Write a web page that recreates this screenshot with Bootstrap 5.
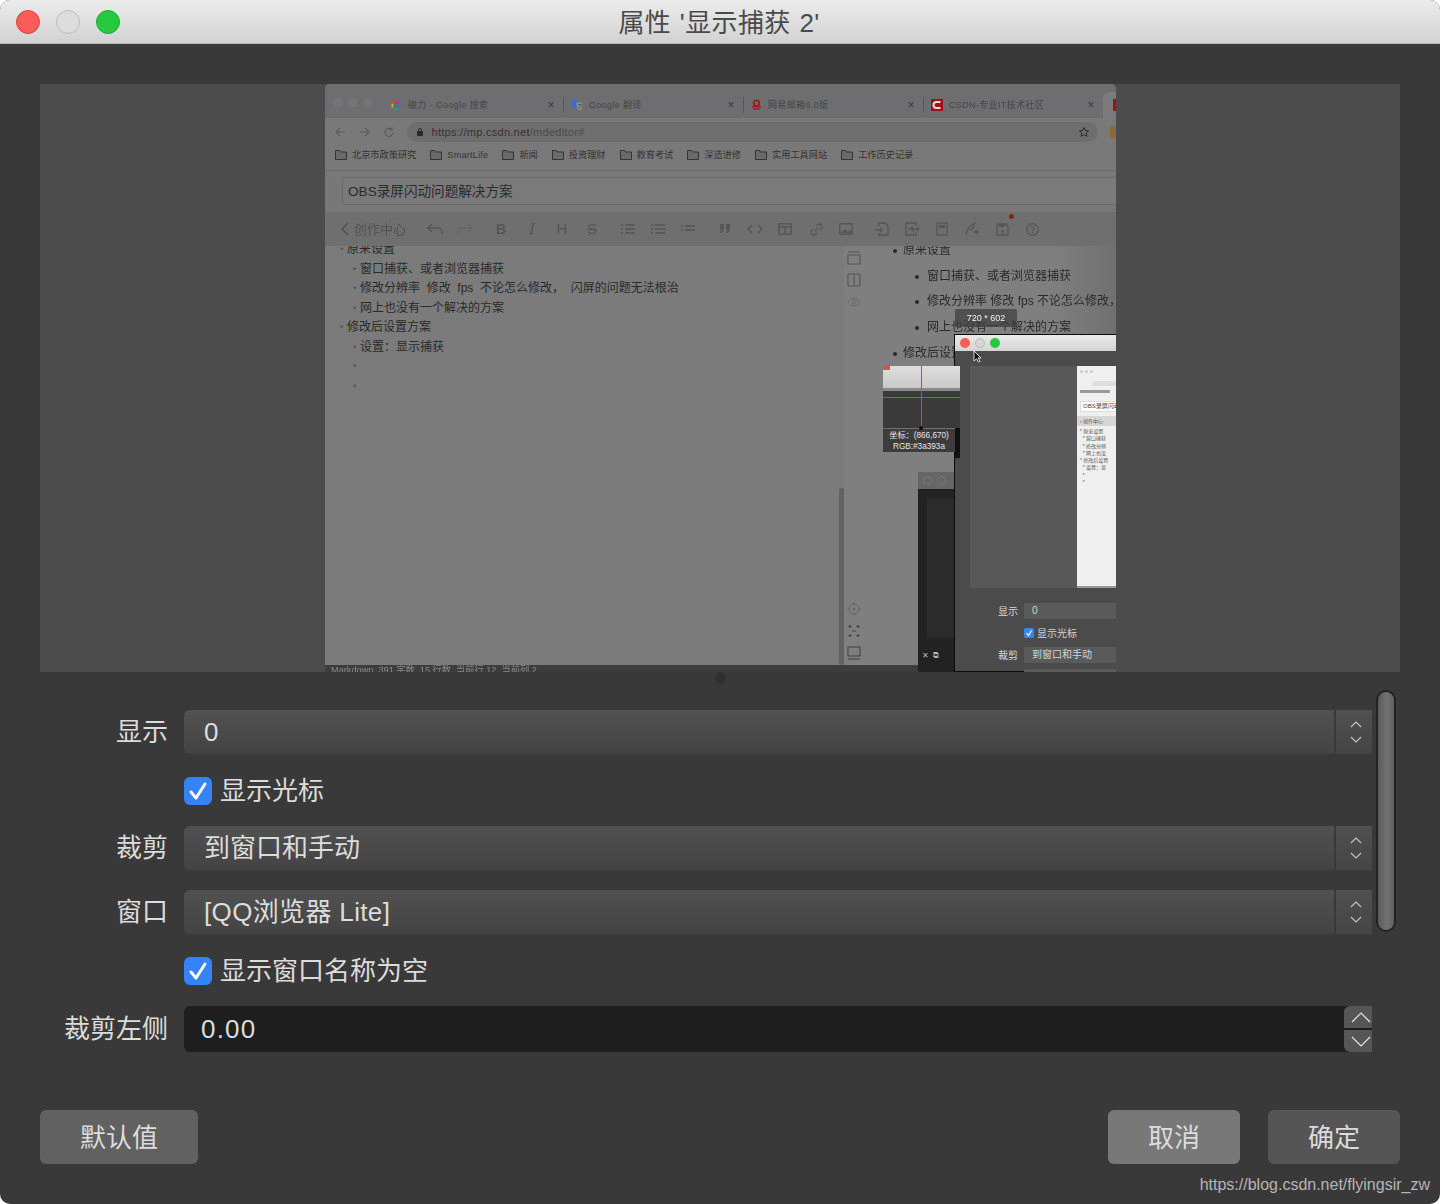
<!DOCTYPE html>
<html lang="zh-CN">
<head>
<meta charset="utf-8">
<title>属性 '显示捕获 2'</title>
<link href="https://cdn.jsdelivr.net/npm/bootstrap@5.3.0/dist/css/bootstrap.min.css" rel="stylesheet">
<style>
html,body{height:100%;background:#fff;overflow:hidden}
body{font-family:"Liberation Sans","Noto Sans CJK SC",sans-serif;color:#dcdcdc}
.appwin{width:1440px;height:1204px;background:#3a393a;border-radius:10px;overflow:hidden;position:relative}
.titlebar{height:44px;background:linear-gradient(#ececec,#d2d2d2);border-bottom:1px solid #b5b5b5;position:relative}
.titletext{font-size:26px;line-height:47px;color:#4a4a4a;text-align:center;letter-spacing:.4px;word-spacing:1px;padding-right:2px}
.lights{position:absolute;left:16px;top:10px;gap:16px}
.lamp{width:24px;height:24px;border-radius:50%;display:block}
.lamp-r{background:#fc5c57;border:1px solid #e0443e}
.lamp-y{background:#dcdcdc;border:1px solid #bcbcbc}
.lamp-g{background:#27c93f;border:1px solid #1dad2b}
.winbody{padding:40px 40px 0}
.preview{height:588px;background:#4c4c4c;position:relative;overflow:hidden}
/* captured browser */
.cap{position:absolute;left:285px;top:0;width:791px;height:588px;overflow:hidden;background:#7b7b7b;border-radius:5px 5px 0 0;color:#2c2c2c;font-size:12px;filter:blur(.25px);display:flex;flex-direction:column}
.tabstrip{height:34px;background:#6e6e70;padding:8px 0 0 8px;font-size:9px;color:#454545;line-height:1;flex:none}
.caplights{gap:5px;width:58px;margin-top:-5px;flex:none}
.caplights span{width:10px;height:10px;border-radius:50%;background:#757575;display:block}
.captab{width:180px;height:26px;flex:none}
.captab.last{width:172px}
.captab svg{flex:none;margin-right:6px}
.captab .tx{flex:1;white-space:nowrap;letter-spacing:.35px}
.captab .cl{width:12px;margin-right:6px;font-size:12px;color:#3a3a3a;text-align:center}
.captab .sep{width:1px;height:16px;background:#585858;margin-right:7px}
.tabend{flex:1;height:26px;background:#7b7b7b;border-radius:8px 0 0 0;padding-left:10px}
.navrow{height:28px;background:#79797a;color:#555;padding-left:3px;flex:none}
.navbtn{width:24.5px;display:flex;justify-content:center;flex:none}
.pill{width:691px;height:20px;border-radius:10px;background:#6e6e6f;margin-left:5px;font-size:11px;letter-spacing:.28px;color:#333;padding:0 8px 0 9px;flex:none}
.pill .dim{color:#4a4a4a}
.extico{width:6px;height:12px;background:#8a6a3a;margin-left:12px;flex:none}
.bmrow{height:24px;background:#79797a;font-size:9.2px;color:#333;padding:0 0 5px 10px;white-space:nowrap;flex:none}
.bm{display:flex;align-items:center;gap:5px;flex:none;margin-right:14px}
.bm .sl{letter-spacing:.2px}
.tiarea{height:42px;background:#787878;padding:6px 0 7px 17px;border-top:1px solid #6c6c6c;flex:none}
.tibox{height:28px;border:1px solid #6b6b6b;border-right:0;border-radius:3px 0 0 3px;background:#7a7a7a;font-size:13.6px;line-height:28px;padding-left:5px;color:#2b2b2b}
.tbar{height:34px;background:#6f6f6f;color:#505050;padding-left:15px;flex:none}
.tback{font-size:13px;color:#505050;width:80px;flex:none;line-height:1}
.slot{width:30px;display:flex;justify-content:center;align-items:center;flex:none;font-size:14px;font-weight:700;color:#555;position:relative}
.slot.it{font-style:italic;font-family:"Liberation Serif",serif;font-weight:400;font-size:16px;margin-left:1px}
.slot.lt{font-weight:400;font-size:15px}
.slot.st{text-decoration:line-through;font-weight:400;font-size:15px}
.g6{margin-left:6px}
.g7{margin-left:7px}
.p1{margin-left:1px}
.reddot{position:absolute;width:5px;height:5px;border-radius:50%;background:#8f1f1f;right:3px;top:-9px}
.panes{flex:1;display:flex;min-height:0;overflow:hidden}
.lp{width:519px;padding-left:15px;position:relative;margin-top:-6px;flex:none;background:#7b7b7b}
.ln{height:19.5px;line-height:19.5px;white-space:pre;color:#2a2a2a}
.ln b{font-weight:400;color:#4a4a4a;display:inline-block;width:7px;font-size:9px}
.ln.l2{padding-left:13px}
.vsb{position:absolute;right:0;top:248px;width:5px;height:177px;background:#626262;border-radius:3px}
.sidec{width:20px;background:#7f7f7f;flex:none;padding:5px 0;flex-direction:column;display:flex;align-items:center;justify-content:space-between}
.sidegrp{display:flex;flex-direction:column;gap:8px;align-items:center}
.rp{flex:1;background:linear-gradient(90deg,#7f7f7f 75%,#707070);padding-left:39px;margin-top:-8px;overflow:hidden}
.rln{height:25.7px;line-height:25.7px;white-space:pre;color:#2a2a2a;position:relative}
.rln::before{content:"";position:absolute;left:-10px;top:11px;width:4px;height:4px;border-radius:50%;background:#2a2a2a}
.rln.l2{padding-left:24px}
.rln.l2::before{left:12px}
.stat{height:7px;background:#3d3d3d;font-size:9.2px;line-height:11px;color:#8b8b8b;padding-left:6px;overflow:hidden;white-space:pre;flex:none}
/* overlays inside capture */
.sizetip{position:absolute;left:630px;top:225px;width:62px;height:18px;background:rgba(62,62,62,.72);color:#f2f2f2;font-size:9px;line-height:18px;text-align:center;border-radius:2px 2px 0 0;z-index:4}
.cursorico{position:absolute;left:648px;top:266px;z-index:8}
.magn{position:absolute;left:558px;top:282px;width:77px;height:86px;background:#3a3a3a;z-index:7}
.magtop{height:25px;background:linear-gradient(#dedede,#c9c9c9);position:relative;border-bottom:3px solid #8a8a8a}
.magred{position:absolute;left:0;top:0;width:7px;height:4px;background:#e24b4b}
.maghz{position:absolute;left:0;right:0;top:31px;height:1px;background:#2a9d2a}
.magvt{position:absolute;left:38px;top:0;height:62px;width:1px;background:#2a9d2a}
.magdot{position:absolute;left:36px;top:60px;width:4px;height:4px;border-radius:50%;background:#111}
.magcap{position:absolute;left:0;right:5px;top:62px;height:24px;background:#3c3c3c;border-top:1px solid #707070;color:#e6e6e6;font-size:8.2px;line-height:11px;text-align:center;padding-top:1px;white-space:nowrap}
.magside{position:absolute;right:0;top:62px;width:5px;height:30px;background:#111}
.darkw{position:absolute;left:593px;top:388px;width:40px;height:200px;background:#222;z-index:2}
.darkt{height:17px;background:#666;padding-left:5px;gap:5px}
.darkt span{width:9px;height:9px;border-radius:50%;border:1px solid #777;display:block}
.darki{margin:9px 0 0 9px;height:140px;background:#2c2c2c}
.darkb{margin-top:12px;padding-left:4px;gap:4px;color:#bbb;font-size:8px}
.subw{position:absolute;left:629px;top:250px;width:170px;height:338px;background:#4b4b4b;border:1px solid #0c0c0c;border-right:0;z-index:5;color:#d5d5d5;font-size:10px}
.subt{height:16px;background:linear-gradient(#eaeaea,#d4d4d4);padding-left:5px;gap:5px}
.subt span{width:10px;height:10px;border-radius:50%;display:block}
.lm-r{background:#fc5c57}
.lm-y{background:#d6d6d6;border:1px solid #bbb}
.lm-g{background:#27c93f}
.subp{height:222px;margin:15px 0 0 15px;background:#585858;position:relative;overflow:hidden}
.minib{position:absolute;left:107px;top:0;width:60px;height:222px;background:#efefef;border-bottom:2px solid #999;color:#555;font-size:5px;line-height:7.3px;padding:0 0 0 3px;white-space:pre;overflow:hidden}
.minitop{height:35px;padding-top:4px}
.minidots{gap:2px;height:6px}
.minidots span{width:3px;height:3px;border-radius:50%;background:#ccc;display:block}
.minipill{height:5px;width:50px;background:#ddd;border-radius:3px;margin:5px 0 0 12px}
.minibm{height:3px;width:30px;background:#999;margin-top:4px}
.minib .mt{border:1px solid #ddd;background:#fff;font-size:6px;line-height:9px;margin:0 0 4px 0;padding-left:2px;color:#444}
.minib .mh{background:#d6d6d6;margin:0 0 2px -3px;padding-left:3px;line-height:10px}
.subrow{display:flex;align-items:center;height:16px;margin-top:6px}
.subrow.first{margin-top:15px}
.sublab{width:69px;text-align:right;padding-right:6px;flex:none}
.subsel{width:100px;height:16px;background:#5a5a5a;border-radius:2px;padding-left:8px;line-height:16px;flex:none}
.subchk{width:10px;height:10px;border-radius:2px;background:#3b84f5;margin-right:3px;flex:none;display:block}
/* form */
.handlebar{height:18px}
.handle{width:11px;height:12px;border-radius:50%;background:#303030}
.formwrap{gap:4px}
.formcol{width:1332px;padding-top:20px;flex:none}
.fgrid{display:grid;grid-template-columns:128px 1188px;column-gap:16px;row-gap:20px;align-items:center}
.flab{font-size:26px;line-height:44px;text-align:right;color:#dcdcdc}
.fsel{height:44px;border-radius:6px 0 0 6px;font-size:26px;color:#dcdcdc}
.fsel-main{flex:1;background:linear-gradient(#515151,#434343);border-radius:6px 0 0 6px;padding-left:20px;line-height:44px;white-space:nowrap}
.lat{letter-spacing:.35px}
.fsel-arr{width:36px;margin-left:2px;padding-left:4px;background:linear-gradient(#505050,#454545);gap:8px;flex:none}
.fchk{height:32px;padding-top:2px;gap:8px;font-size:26px;color:#dcdcdc;grid-column:2}
.form-check-input.fbox,.form-check-input.fbox:checked{width:28px;height:28px;margin:0;border-radius:6px;background-color:#3483f8;border:0;background-size:28px;opacity:1;flex:none;background-image:url("data:image/svg+xml,%3Csvg xmlns='http://www.w3.org/2000/svg' viewBox='0 0 28 28'%3E%3Cpath d='M7 15l5 6L21 7' fill='none' stroke='%23fff' stroke-width='3' stroke-linecap='round' stroke-linejoin='round'/%3E%3C/svg%3E")}
.fspin{height:46px;background:#1e1e1e;border-radius:6px 0 0 6px;font-size:26px;padding-left:17px;color:#dcdcdc;position:relative;letter-spacing:1.2px}
.spbtns{position:absolute;right:0;top:0;width:28px;height:46px;display:flex;flex-direction:column;justify-content:space-between}
.spb{height:22px;background:#565656;display:flex;align-items:center;justify-content:center;padding-left:6px}
.spb.up{border-top-left-radius:6px}
.spb.dn{border-bottom-left-radius:6px}
.sbar{width:20px;height:242px;border:2px solid #232323;border-radius:10px;background:linear-gradient(90deg,#5a5a5a,#727272 55%,#606060);flex:none}
.botbar{margin-top:58px}
.btn.dlg{height:54px;border:0;border-radius:6px;font-size:26px;line-height:54px;padding:1px 0 0;color:#dcdcdc;font-family:inherit}
.b-def{width:158px;background:#616161}
.b-can{width:132px;background:#787878}
.b-ok{width:132px;background:#555}
.btngap{gap:28px}
.wm{position:absolute;right:10px;bottom:9px;font-size:16px;line-height:20px;color:#b5b5b5;white-space:nowrap}
</style>
</head>
<body>
<div class="appwin">
  <div class="titlebar">
    <div class="lights d-flex"><span class="lamp lamp-r"></span><span class="lamp lamp-y"></span><span class="lamp lamp-g"></span></div>
    <div class="titletext">属性 '显示捕获 2'</div>
  </div>
  <div class="winbody">
    <div class="preview">
      <div class="cap">
        <div class="tabstrip d-flex align-items-center">
          <div class="caplights d-flex"><span></span><span></span><span></span></div>
          <div class="captab d-flex align-items-center">
            <svg width="11" height="11" viewBox="0 0 24 24"><path d="M22 12h-10v3h6a6.500 6.500 0 1 1-2-7" fill="none" stroke="#3f6fc0" stroke-width="4"/><path d="M16 8a6.500 6.500 0 0 0-10-1" fill="none" stroke="#c8403a" stroke-width="4"/><path d="M5 17a7 7 0 0 0 11 1" fill="none" stroke="#3c9a55" stroke-width="4"/><path d="M4 8a8 8 0 0 0 0 8" fill="none" stroke="#d9a826" stroke-width="4"/></svg>
            <span class="tx">磁力 - Google 搜索</span><span class="cl">×</span><span class="sep"></span>
          </div>
          <div class="captab d-flex align-items-center">
            <svg width="12" height="12" viewBox="0 0 24 24"><rect x="1" y="1" width="13" height="18" rx="2" fill="#3f6fc0"/><path d="M10 7h12v15H13z" fill="#8a8a8a"/><path d="M15 11h6M18 10v2M16 19l4-6" stroke="#444" stroke-width="1.500" fill="none"/></svg>
            <span class="tx">Google 翻译</span><span class="cl">×</span><span class="sep"></span>
          </div>
          <div class="captab d-flex align-items-center">
            <svg width="11" height="12" viewBox="0 0 24 24"><circle cx="12" cy="8" r="6" fill="none" stroke="#9c1c1c" stroke-width="4"/><path d="M3 17c4-3 14-3 18 0M6 22c3-3 9-3 12 0" fill="none" stroke="#9c1c1c" stroke-width="3.500"/></svg>
            <span class="tx">网易邮箱6.0版</span><span class="cl">×</span><span class="sep"></span>
          </div>
          <div class="captab last d-flex align-items-center">
            <svg width="12" height="12" viewBox="0 0 24 24"><rect width="24" height="24" fill="#9c1414"/><path d="M19 6h-8a6 6 0 0 0 0 12h8" fill="none" stroke="#ddd" stroke-width="4"/></svg>
            <span class="tx">CSDN-专业IT技术社区</span><span class="cl">×</span>
          </div>
          <div class="tabend d-flex align-items-center"><svg width="12" height="12" viewBox="0 0 24 24"><rect width="24" height="24" fill="#9c1414"/></svg></div>
        </div>
        <div class="navrow d-flex align-items-center">
          <span class="navbtn"><svg width="12" height="12" viewBox="0 0 12 12"><path d="M11 6H2M6 2 2 6l4 4" fill="none" stroke="#5a5a5a" stroke-width="1.100"/></svg></span>
          <span class="navbtn"><svg width="12" height="12" viewBox="0 0 12 12"><path d="M1 6h9M6 2l4 4-4 4" fill="none" stroke="#5a5a5a" stroke-width="1.100"/></svg></span>
          <span class="navbtn"><svg width="12" height="12" viewBox="0 0 12 12"><path d="M10 6.500a4 4 0 1 1-1.200-3M9 1v3H6" fill="none" stroke="#5a5a5a" stroke-width="1.100"/></svg></span>
          <div class="pill d-flex align-items-center">
            <svg width="8" height="10" viewBox="0 0 8 10" class="me-2"><rect x="1" y="4" width="6" height="5" rx="1" fill="#2a2a2a"/><path d="M2.500 4V3a1.500 1.500 0 0 1 3 0v1" fill="none" stroke="#2a2a2a"/></svg>
            <span>https://mp.csdn.net<span class="dim">/mdeditor#</span></span>
            <svg width="12" height="12" viewBox="0 0 24 24" class="ms-auto"><path d="m12 3 2.800 6 6.500.8-4.800 4.400 1.300 6.500L12 17.500l-5.800 3.200 1.300-6.500L2.700 9.800 9.200 9z" fill="none" stroke="#2a2a2a" stroke-width="2"/></svg>
          </div>
          <span class="extico"></span>
        </div>
        <div class="bmrow d-flex align-items-center">
          <div class="bm"><svg width="12" height="10" viewBox="0 0 12 10"><path d="M.5.500h4l1 1.500h6v7.500H.5z" fill="#6a6a6a" stroke="#333"/></svg>北京市政策研究</div>
          <div class="bm"><svg width="12" height="10" viewBox="0 0 12 10"><path d="M.5.500h4l1 1.500h6v7.500H.5z" fill="#6a6a6a" stroke="#333"/></svg><span class="sl">SmartLife</span></div>
          <div class="bm"><svg width="12" height="10" viewBox="0 0 12 10"><path d="M.5.500h4l1 1.500h6v7.500H.5z" fill="#6a6a6a" stroke="#333"/></svg>新闻</div>
          <div class="bm"><svg width="12" height="10" viewBox="0 0 12 10"><path d="M.5.500h4l1 1.500h6v7.500H.5z" fill="#6a6a6a" stroke="#333"/></svg>投资理财</div>
          <div class="bm"><svg width="12" height="10" viewBox="0 0 12 10"><path d="M.5.500h4l1 1.500h6v7.500H.5z" fill="#6a6a6a" stroke="#333"/></svg>教育考试</div>
          <div class="bm"><svg width="12" height="10" viewBox="0 0 12 10"><path d="M.5.500h4l1 1.500h6v7.500H.5z" fill="#6a6a6a" stroke="#333"/></svg>深造进修</div>
          <div class="bm"><svg width="12" height="10" viewBox="0 0 12 10"><path d="M.5.500h4l1 1.500h6v7.500H.5z" fill="#6a6a6a" stroke="#333"/></svg>实用工具网站</div>
          <div class="bm"><svg width="12" height="10" viewBox="0 0 12 10"><path d="M.5.500h4l1 1.500h6v7.500H.5z" fill="#6a6a6a" stroke="#333"/></svg>工作历史记录</div>
        </div>
        <div class="tiarea"><div class="tibox">OBS录屏闪动问题解决方案</div></div>
        <div class="tbar d-flex align-items-center">
          <div class="tback d-flex align-items-center"><svg width="10" height="14" viewBox="0 0 10 14" class="me-1"><path d="M8 1 2 7l6 6" fill="none" stroke="#505050" stroke-width="1.600"/></svg>创作中心</div>
          <span class="slot"><svg width="16" height="12" viewBox="0 0 16 12"><path d="M5 1 1 5l4 4M1 5h10a4 4 0 0 1 4 4v2" fill="none" stroke="#555" stroke-width="1.500"/></svg></span>
          <span class="slot"><svg width="16" height="12" viewBox="0 0 16 12"><path d="m11 1 4 4-4 4M15 5H5a4 4 0 0 0-4 4v2" fill="none" stroke="#666" stroke-width="1.500"/></svg></span>
          <span class="slot g6">B</span><span class="slot it">I</span><span class="slot lt">H</span><span class="slot st">S</span>
          <span class="slot g6"><svg width="14" height="12" viewBox="0 0 14 12"><path d="M4 2h10M4 6h10M4 10h10M0 2h2M0 6h2M0 10h2" stroke="#555" stroke-width="1.400"/></svg></span>
          <span class="slot"><svg width="14" height="12" viewBox="0 0 14 12"><path d="M4 2h10M4 6h10M4 10h10M0 2h2M0 6h2M0 10h2" stroke="#555" stroke-width="1.400"/></svg></span>
          <span class="slot"><svg width="14" height="10" viewBox="0 0 14 10"><path d="M4 2h10M4 6h10M0 2h2M0 6h2" stroke="#555" stroke-width="1.400"/></svg></span>
          <span class="slot g7"><svg width="12" height="10" viewBox="0 0 12 10"><path d="M1 0h4v5L3 9H1l1-4H1zM7 0h4v5L9 9H7l1-4H7z" fill="#555"/></svg></span>
          <span class="slot"><svg width="16" height="10" viewBox="0 0 16 10"><path d="M5 1 1 5l4 4M11 1l4 4-4 4" fill="none" stroke="#555" stroke-width="1.500"/></svg></span>
          <span class="slot"><svg width="14" height="12" viewBox="0 0 14 12"><rect x=".7" y=".7" width="12.600" height="10.600" rx="1" fill="none" stroke="#555" stroke-width="1.400"/><path d="M1 4h12M7 4v7" stroke="#555" stroke-width="1.400"/></svg></span>
          <span class="slot p1"><svg width="13" height="13" viewBox="0 0 24 24"><path d="m9 15 6-6M11 6l3-3a5 5 0 0 1 7 7l-3 3M13 18l-3 3a5 5 0 0 1-7-7l3-3" fill="none" stroke="#555" stroke-width="2.400"/></svg></span>
          <span class="slot"><svg width="14" height="12" viewBox="0 0 14 12"><rect x=".7" y=".7" width="12.600" height="10.600" rx="1" fill="none" stroke="#555" stroke-width="1.400"/><path d="m2 10 4-4 3 3 2-2 2 3z" fill="#555"/></svg></span>
          <span class="slot g6"><svg width="15" height="14" viewBox="0 0 15 14"><path d="M4 4V1h6l3 3v9H4v-2M0 8h7M5 6l2 2-2 2" fill="none" stroke="#555" stroke-width="1.300"/></svg></span>
          <span class="slot"><svg width="15" height="14" viewBox="0 0 15 14"><path d="M11 4V1H1v12h10v-3M3 7h3l1-2 1 4 1-2h5M12 5l2 2-2 2" fill="none" stroke="#555" stroke-width="1.300"/></svg></span>
          <span class="slot"><svg width="12" height="14" viewBox="0 0 12 14"><rect x="1" y="1" width="10" height="12" fill="none" stroke="#555" stroke-width="1.300"/><rect x="3" y="3" width="6" height="3" fill="#555"/></svg></span>
          <span class="slot"><svg width="14" height="14" viewBox="0 0 14 14"><path d="M1 13C2 7 5 3 10 1L8 6 5 8M9 10h5M11.500 7.500v5" fill="none" stroke="#555" stroke-width="1.300"/></svg></span>
          <span class="slot"><svg width="13" height="13" viewBox="0 0 13 13"><path d="M1 1h9l2 2v9H1z" fill="none" stroke="#555" stroke-width="1.300"/><path d="M3 1h6v3H3z" fill="#555"/><circle cx="6.500" cy="8.500" r="1.500" fill="#555"/></svg><i class="reddot"></i></span>
          <span class="slot"><svg width="13" height="13" viewBox="0 0 13 13"><circle cx="6.500" cy="6.500" r="5.800" fill="none" stroke="#555" stroke-width="1.200"/><path d="M4.800 5a1.800 1.800 0 1 1 2.500 1.700c-.6.300-.8.600-.8 1.300" fill="none" stroke="#555" stroke-width="1.100"/><circle cx="6.500" cy="9.800" r=".7" fill="#555"/></svg></span>
        </div>
        <div class="panes">
          <div class="lp">
            <div class="ln"><b>*</b>原来设置</div>
            <div class="ln l2"><b>*</b>窗口捕获、或者浏览器捕获</div>
            <div class="ln l2"><b>*</b>修改分辨率  修改  fps  不论怎么修改，  闪屏的问题无法根治</div>
            <div class="ln l2"><b>*</b>网上也没有一个解决的方案</div>
            <div class="ln"><b>*</b>修改后设置方案</div>
            <div class="ln l2"><b>*</b>设置：显示捕获</div>
            <div class="ln l2"><b>*</b></div>
            <div class="ln l2"><b>*</b></div>
            <div class="vsb"></div>
          </div>
          <div class="sidec">
            <div class="sidegrp">
              <svg width="14" height="14" viewBox="0 0 14 14"><path d="M1 1h12M1 4h12v9H1z" fill="none" stroke="#555" stroke-width="1.200"/></svg>
              <svg width="14" height="14" viewBox="0 0 14 14"><rect x="1" y="1" width="12" height="12" rx="1" fill="none" stroke="#555" stroke-width="1.200"/><path d="M7 1v12" stroke="#555" stroke-width="1.200"/></svg>
              <svg width="14" height="14" viewBox="0 0 14 14"><path d="M1 7c3-5 9-5 12 0-3 5-9 5-12 0z" fill="none" stroke="#6a6a6a"/><circle cx="7" cy="7" r="2" fill="none" stroke="#6a6a6a"/></svg>
            </div>
            <div class="sidegrp">
              <svg width="14" height="14" viewBox="0 0 14 14"><circle cx="7" cy="7" r="5" fill="none" stroke="#666"/><circle cx="7" cy="7" r="1.200" fill="#666"/><path d="M7 0v3M7 11v3M0 7h3M11 7h3" stroke="#666"/></svg>
              <svg width="12" height="14" viewBox="0 0 12 14"><path d="M2 4V1M10 4V1M2 13v-3M10 13v-3M4 7h4" stroke="#444" stroke-width="1.200"/><path d="m0 3 2-2 2 2zM8 3l2-2 2 2zM0 11l2 2 2-2zM8 11l2 2 2-2z" fill="#444"/></svg>
              <svg width="14" height="14" viewBox="0 0 14 14"><rect x="1" y="1" width="12" height="9" fill="none" stroke="#444" stroke-width="1.100"/><path d="M1 13h12" stroke="#444" stroke-width="1.100"/></svg>
            </div>
          </div>
          <div class="rp">
            <div class="rln">原来设置</div>
            <div class="rln l2">窗口捕获、或者浏览器捕获</div>
            <div class="rln l2">修改分辨率 修改 fps 不论怎么修改，</div>
            <div class="rln l2">网上也没有一个解决的方案</div>
            <div class="rln">修改后设置方案</div>
          </div>
        </div>
        <div class="stat">Markdown  391 字数  15 行数  当前行 12, 当前列 2</div>

        <div class="magn">
          <div class="magtop"><span class="magred"></span></div>
          <span class="maghz"></span><span class="magvt"></span>
          <div class="magcap">坐标：(866,670)<br>RGB:#3a393a</div>
          <span class="magdot"></span>
          <span class="magside"></span>
        </div>
        <div class="darkw">
          <div class="darkt d-flex align-items-center"><span></span><span></span></div>
          <div class="darki"></div>
          <div class="darkb d-flex"><span>✕</span><span>⧉</span></div>
        </div>
        <div class="sizetip">720 * 602</div>
        <div class="subw">
          <div class="subt d-flex align-items-center"><span class="lm-r"></span><span class="lm-y"></span><span class="lm-g"></span></div>
          <div class="subp">
            <div class="minib"><div class="minitop"><div class="minidots d-flex"><span></span><span></span><span></span></div><div class="minipill"></div><div class="minibm"></div></div><div class="mt">OBS录屏闪动</div><div class="mh">‹ 创作中心</div>* 原来设置
  * 窗口捕获
  * 修改分辨
  * 网上也没
* 修改后设置
  * 设置：显
  *
  *</div>
          </div>
          <div class="subrow first"><span class="sublab">显示</span><span class="subsel">0</span></div>
          <div class="subrow"><span class="sublab"></span><span class="subchk"><svg width="10" height="10" viewBox="0 0 10 10" class="d-block"><path d="m2.500 5 2 2.500 3-5" fill="none" stroke="#fff" stroke-width="1.200"/></svg></span>显示光标</div>
          <div class="subrow"><span class="sublab">裁剪</span><span class="subsel">到窗口和手动</span></div>
          <div class="subrow"><span class="sublab"></span><span class="subsel"></span></div>
        </div>
        <svg class="cursorico" width="9" height="13" viewBox="0 0 9 13"><path d="M1 1v10l2.500-2.200L5.500 12l1.500-.8-2-3.200H8z" fill="#111" stroke="#fff" stroke-width=".8"/></svg>
      </div>
    </div>
    <div class="handlebar d-flex justify-content-center"><span class="handle"></span></div>
    <div class="formwrap d-flex align-items-start">
      <div class="formcol">
        <div class="fgrid">
          <div class="flab">显示</div>
          <div class="fsel d-flex"><div class="fsel-main">0</div><div class="fsel-arr d-flex flex-column align-items-center justify-content-center"><svg width="12" height="7" viewBox="0 0 12 7"><path d="m1 6 5-5 5 5" fill="none" stroke="#c8c8c8" stroke-width="1.100"/></svg><svg width="12" height="7" viewBox="0 0 12 7"><path d="m1 1 5 5 5-5" fill="none" stroke="#c8c8c8" stroke-width="1.100"/></svg></div></div>
          <div class="fchk d-flex align-items-center"><input class="form-check-input fbox" type="checkbox" checked aria-label="显示光标"><span>显示光标</span></div>
          <div class="flab">裁剪</div>
          <div class="fsel d-flex"><div class="fsel-main">到窗口和手动</div><div class="fsel-arr d-flex flex-column align-items-center justify-content-center"><svg width="12" height="7" viewBox="0 0 12 7"><path d="m1 6 5-5 5 5" fill="none" stroke="#c8c8c8" stroke-width="1.100"/></svg><svg width="12" height="7" viewBox="0 0 12 7"><path d="m1 1 5 5 5-5" fill="none" stroke="#c8c8c8" stroke-width="1.100"/></svg></div></div>
          <div class="flab">窗口</div>
          <div class="fsel d-flex"><div class="fsel-main lat">[QQ浏览器 Lite]</div><div class="fsel-arr d-flex flex-column align-items-center justify-content-center"><svg width="12" height="7" viewBox="0 0 12 7"><path d="m1 6 5-5 5 5" fill="none" stroke="#c8c8c8" stroke-width="1.100"/></svg><svg width="12" height="7" viewBox="0 0 12 7"><path d="m1 1 5 5 5-5" fill="none" stroke="#c8c8c8" stroke-width="1.100"/></svg></div></div>
          <div class="fchk d-flex align-items-center"><input class="form-check-input fbox" type="checkbox" checked aria-label="显示窗口名称为空"><span>显示窗口名称为空</span></div>
          <div class="flab">裁剪左侧</div>
          <div class="fspin d-flex align-items-center">0.00
            <div class="spbtns"><span class="spb up"><svg width="20" height="11" viewBox="0 0 20 11"><path d="m1 10 9-9 9 9" fill="none" stroke="#e6e6e6" stroke-width="1.200"/></svg></span><span class="spb dn"><svg width="20" height="11" viewBox="0 0 20 11"><path d="m1 1 9 9 9-9" fill="none" stroke="#e6e6e6" stroke-width="1.200"/></svg></span></div>
          </div>
        </div>
      </div>
      <div class="sbar"></div>
    </div>
    <div class="botbar d-flex justify-content-between">
      <button type="button" class="btn dlg b-def">默认值</button>
      <div class="d-flex btngap">
        <button type="button" class="btn dlg b-can">取消</button>
        <button type="button" class="btn dlg b-ok">确定</button>
      </div>
    </div>
  </div>
  <div class="wm">https://blog.csdn.net/flyingsir_zw</div>
</div>
<script src="https://cdn.jsdelivr.net/npm/bootstrap@5.3.0/dist/js/bootstrap.bundle.min.js"></script>
</body>
</html>
